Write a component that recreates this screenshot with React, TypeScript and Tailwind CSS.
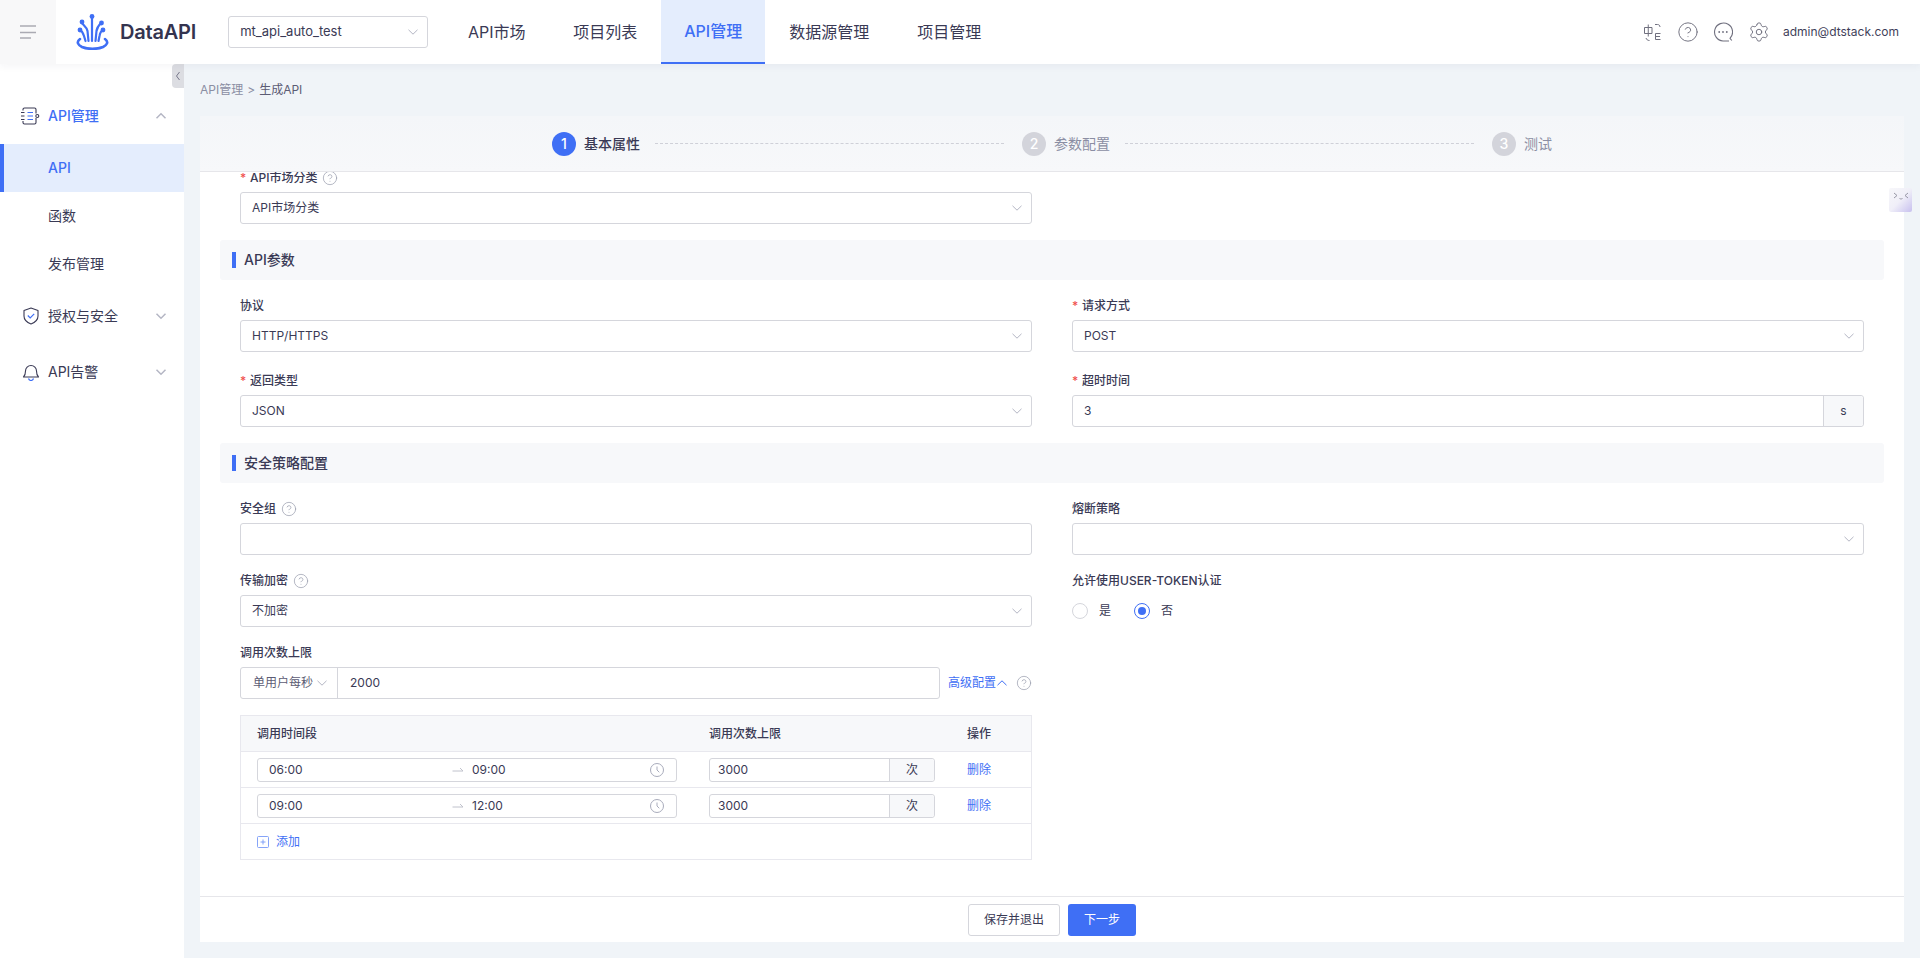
import React from "react";
import { CircleHelp, Settings } from "lucide-react";

const Chevron = ({ up = false, className = "", sw = 1 }: { up?: boolean; className?: string; sw?: number }) => (
  <svg width="12" height="12" viewBox="0 0 12 12" fill="none" className={`shrink-0 ${className}`}>
    <path d={up ? "M1.500 8.200 6 3.800l4.500 4.400" : "M1.500 3.800 6 8.200l4.500-4.400"} stroke="currentColor" strokeWidth={sw} />
  </svg>
);

const Help = ({ className = "" }: { className?: string }) => (
  <CircleHelp size={16} strokeWidth={1.1} className={`shrink-0 text-[#9a9dae] ${className}`} />
);

const Logo = () => (
  <svg width="33" height="36" viewBox="0 0 33 36" fill="none" className="shrink-0">
    <g stroke="#3f6ff5" strokeWidth="2.200" strokeLinecap="round">
      <path d="M16 3v24" />
      <path d="M6 9c1 2 5 4 5.500 8l1 10" />
      <path d="M25 9c-2 2-4 4-4.500 8l-1 10" />
      <path d="M4 16c2 1 3 3 4 6l1.500 5" />
      <path d="M27 16c-2 1-3 3-3.500 6l-1 5" />
    </g>
    <g fill="#3f6ff5">
      <circle cx="16" cy="2.500" r="2.400" />
      <circle cx="6" cy="8" r="2.400" />
      <circle cx="25.500" cy="9" r="2.400" />
      <circle cx="4" cy="16" r="2.400" />
      <circle cx="27" cy="16" r="2.400" />
    </g>
    <path d="M4 25c-4 3-2 6 2 8 6 2.500 15 2.500 21 0 4-2 6-5 2-8" stroke="#3f6ff5" strokeWidth="2.600" strokeLinecap="round" />
  </svg>
);

const Field = ({
  label,
  required,
  help,
  children,
  className = "",
}: {
  label: string;
  required?: boolean;
  help?: boolean;
  children?: React.ReactNode;
  className?: string;
}) => (
  <div className={className}>
    <div className="flex items-center h-5 pt-[2px] mb-[5px] text-xs font-medium text-[#3a3a55]">
      {required && <span className="w-[10px] text-[#f0524f]">*</span>}
      <span>{label}</span>
      {help && <Help className="ml-[5px]" />}
    </div>
    {children}
  </div>
);

const Select = ({ value = "" }: { value?: string }) => (
  <div className="flex items-center justify-between h-8 rounded-[3px] border border-[#d5d6dc] bg-white pl-[11px] pr-2 text-xs text-[#3a3a55]">
    <span>{value}</span>
    <Chevron className="text-[#b4b6c4]" />
  </div>
);

const Input = ({ value = "" }: { value?: string }) => (
  <div className="flex items-center h-8 rounded-[3px] border border-[#d5d6dc] bg-white px-[11px] text-xs text-[#3a3a55]">{value}</div>
);

const Section = ({ title, className = "" }: { title: string; className?: string }) => (
  <div className={`flex items-center h-10 -mx-5 pl-3 rounded-[3px] bg-[#f7f8fa] ${className}`}>
    <span className="w-1 h-4 bg-[#3f6ff5] mr-2" />
    <span className="text-sm font-medium text-[#3a3a55]">{title}</span>
  </div>
);

const Step = ({ n, label, active }: { n: number; label: string; active?: boolean }) => (
  <div className="flex items-center gap-2 shrink-0">
    <span
      className={`flex items-center justify-center w-6 h-6 rounded-full text-sm font-medium text-white ${
        active ? "bg-[#3f6ff5]" : "bg-[#d3d4db]"
      }`}
    >
      {n}
    </span>
    <span className={`text-sm ${active ? "font-medium text-[#3a3a55]" : "text-[#8b8ea3]"}`}>{label}</span>
  </div>
);

const Clock = () => (
  <svg width="16" height="16" viewBox="0 0 16 16" fill="none" className="text-[#a9acbc]">
    <circle cx="8" cy="8" r="6.500" stroke="currentColor" strokeWidth="1" />
    <path d="M8 4.500V8l2.300 2.300" stroke="currentColor" strokeWidth="1" />
  </svg>
);

const TimeRow = ({ start, end }: { start: string; end: string }) => (
  <div className="grid grid-cols-[468px_258px_1fr] items-center h-9 border-b border-[#e8e8ee] text-xs text-[#3a3a55]">
    <div className="pl-4">
      <div className="flex items-center w-[420px] h-6 rounded-[3px] border border-[#d5d6dc] pl-[11px] pr-[11px]">
        <span className="w-[183px]">{start}</span>
        <svg width="12" height="8" viewBox="0 0 12 8" fill="none" className="shrink-0">
          <path d="M0.500 5h10.500L8 2" stroke="#c0c2cc" strokeWidth="1" />
        </svg>
        <span className="ml-2 flex-1">{end}</span>
        <Clock />
      </div>
    </div>
    <div className="flex items-center w-[226px] h-6 rounded-[3px] border border-[#d5d6dc]">
      <span className="flex-1 pl-2">3000</span>
      <span className="flex items-center justify-center w-[45px] h-full border-l border-[#d5d6dc] bg-[#f7f8fa] rounded-r-[3px]">次</span>
    </div>
    <span className="text-[#3f6ff5]">删除</span>
  </div>
);

const NavTab = ({ label, active, width }: { label: string; active?: boolean; width: string }) => (
  <div
    className={`flex items-center justify-center h-16 text-base ${width} ${
      active ? "bg-[#e4edfd] text-[#3f6ff5] font-medium border-b-2 border-[#3f6ff5]" : "text-[#3a3a55]"
    }`}
  >
    {label}
  </div>
);

const SideHead = ({
  icon,
  label,
  open,
  active,
  className = "",
}: {
  icon: React.ReactNode;
  label: string;
  open?: boolean;
  active?: boolean;
  className?: string;
}) => (
  <div className={`flex items-center h-12 pl-5 pr-[17px] text-sm ${active ? "text-[#3f6ff5] font-medium" : "text-[#3a3a55]"} ${className}`}>
    <span className="flex items-center w-7 shrink-0">{icon}</span>
    <span className="flex-1">{label}</span>
    <Chevron up={open} sw={1.5} className="text-[#b4b6c4]" />
  </div>
);

export default function App() {
  return (
    <div className="relative flex flex-col w-full h-[958px] overflow-hidden bg-[#f0f4f8] font-[Inter,'Noto_Sans_CJK_SC',sans-serif] text-[#3a3a55]">
      {/* Header */}
      <header className="relative z-10 flex items-center h-16 shrink-0 bg-white shadow-[0_2px_8px_rgba(30,40,70,0.05)]">
        <div className="flex items-center justify-center w-14 h-16 bg-[#f8f8f9]">
          <svg width="16" height="14" viewBox="0 0 16 14" fill="none">
            <path d="M0 1h16M0 7.500h16M0 13h11" stroke="#aaaab3" strokeWidth="1.600" />
          </svg>
        </div>
        <div className="ml-5">
          <Logo />
        </div>
        <span className="ml-[11px] text-[20px] font-semibold tracking-[-0.2px] text-[#34344f]">DataAPI</span>
        <div className="flex items-center justify-between w-[200px] h-8 ml-8 rounded-[3px] border border-[#d5d6dc] pl-[11px] pr-2 text-[13px] text-[#3a3a55]">
          <span>mt_api_auto_test</span>
          <Chevron className="text-[#b4b6c4]" />
        </div>
        <nav className="flex ml-4">
          <NavTab label="API市场" width="w-[105px]" />
          <NavTab label="项目列表" width="w-[112px]" />
          <NavTab label="API管理" active width="w-[104px]" />
          <NavTab label="数据源管理" width="w-[128px]" />
          <NavTab label="项目管理" width="w-[112px]" />
        </nav>
        <div className="flex items-center ml-auto pr-[21px] text-[#70707f]">
          <svg width="19" height="19" viewBox="0 0 19 19" fill="none" stroke="currentColor" strokeWidth="1">
            <path d="M1.500 4.500h7.500v6H1.500zM5.250 1.500v12" />
            <path d="M12 1.500h2.500c1.500 0 2.500 1 2.500 2.500" />
            <path d="M3 15c.5 1.500 1.500 2.500 3.500 2.500" />
            <path d="M17.500 10.500h-5v6h5M12.500 13.500h4.500" />
          </svg>
          <CircleHelp size={22} strokeWidth={1.05} className="ml-[15px]" />
          <svg width="20" height="20" viewBox="0 0 20 20" fill="none" className="ml-[14px]">
            <path d="M18.800 18.500 17 16.300A9 9 0 1 0 10 19h6" stroke="currentColor" strokeWidth="1.100" strokeLinejoin="round" />
            <circle cx="6.200" cy="10" r="0.900" fill="currentColor" />
            <circle cx="10" cy="10" r="0.900" fill="currentColor" />
            <circle cx="13.800" cy="10" r="0.900" fill="currentColor" />
          </svg>
          <Settings size={22} strokeWidth={1.05} className="ml-[15px]" />
          <span className="ml-[13px] text-xs text-[#3f3f5a]">admin@dtstack.com</span>
        </div>
      </header>

      <div className="flex flex-1 min-h-0">
        {/* Sidebar */}
        <aside className="relative w-[184px] shrink-0 bg-white pt-7">
          <div className="absolute right-0 top-0 flex items-center justify-center w-3 h-6 rounded-bl-[4px] rounded-tl-[4px] bg-[#dcdde2]">
            <svg width="6" height="10" viewBox="0 0 6 10" fill="none">
              <path d="M4.500 1 1.500 5l3 4" stroke="#77778a" strokeWidth="1" />
            </svg>
          </div>
          <SideHead
            active
            open
            className="mb-1"
            label="API管理"
            icon={
              <svg width="20" height="18" viewBox="0 0 20 18" fill="none" stroke="#3a3a55" strokeWidth="1.100">
                <path d="M3 3.500V2.500a1.500 1.500 0 0 1 1.500-1.500h10a1.500 1.500 0 0 1 1.500 1.500v4M16 11v4.500a1.500 1.500 0 0 1-1.500 1.500h-10A1.500 1.500 0 0 1 3 15.500V14" />
                <path d="M1 5.500h3.500M1 9h3.500M1 12.500h3.500" />
                <path d="M7.500 5.500h5.500M7.500 9h5.500M7.500 12.500h5.500" stroke="#3f6ff5" />
                <circle cx="17.300" cy="9" r="1.500" />
              </svg>
            }
          />
          <div className="flex items-center h-12 pl-11 text-sm font-medium text-[#3f6ff5] bg-[#e4edfd] border-l-4 border-[#3f6ff5]">API</div>
          <div className="flex items-center h-12 pl-12 text-sm text-[#3a3a55]">函数</div>
          <div className="flex items-center h-12 pl-12 text-sm text-[#3a3a55]">发布管理</div>
          <SideHead
            className="mt-[4px]"
            label="授权与安全"
            icon={
              <svg width="18" height="18" viewBox="0 0 18 18" fill="none" className="ml-[2px]">
                <path d="M9 1 16 3.500V9c0 4-3 6.500-7 8-4-1.500-7-4-7-8V3.500z" stroke="#3a3a55" strokeWidth="1.100" strokeLinejoin="round" />
                <path d="m5.800 8.500 2.400 2.400 4-4" stroke="#3f6ff5" strokeWidth="1.200" />
              </svg>
            }
          />
          <SideHead
            className="mt-2"
            label="API告警"
            icon={
              <svg width="18" height="18" viewBox="0 0 18 18" fill="none" className="ml-[2px]">
                <path d="M1.500 14h15c-1.500-1.500-2-3-2-6A5.500 5.500 0 0 0 3.500 8c0 3-.5 4.500-2 6z" stroke="#3a3a55" strokeWidth="1.100" strokeLinejoin="round" />
                <path d="M6.500 15.500c.5 1.500 1.500 2 2.500 2s2-.5 2.500-2" stroke="#3f6ff5" strokeWidth="1.200" />
              </svg>
            }
          />
        </aside>

        {/* Content */}
        <main className="flex flex-col flex-1 min-w-0 pl-4 pr-4 pb-4">
          <div className="flex items-center h-[52px] shrink-0 text-xs">
            <span className="text-[#8b8ea3]">API管理</span>
            <span className="mx-1 text-[#8b8ea3]">&gt;</span>
            <span className="text-[#5c5c74]">生成API</span>
          </div>
          <div className="flex flex-col flex-1 min-h-0 bg-white">
            <div className="flex items-center h-14 shrink-0 pl-[352px] bg-gradient-to-b from-[#f4f6f9] to-[#f7f8fa] border-b border-[#e6e6ea]">
              <Step n={1} label="基本属性" active />
              <span className="w-[349px] ml-[15px] mr-[18px] border-t border-dashed border-[#cfd0d8]" />
              <Step n={2} label="参数配置" />
              <span className="w-[349px] ml-[15px] mr-[18px] border-t border-dashed border-[#cfd0d8]" />
              <Step n={3} label="测试" />
            </div>

            <div className="flex-1 min-h-0 overflow-hidden px-10">
              <div className="-mt-[5px]">
                <div className="grid grid-cols-2 gap-x-10">
                  <Field label="API市场分类" required help>
                    <Select value="API市场分类" />
                  </Field>
                </div>

                <Section title="API参数" className="mt-4 mb-[15px]" />

                <div className="grid grid-cols-2 gap-x-10 gap-y-[18px]">
                  <Field label="协议">
                    <Select value="HTTP/HTTPS" />
                  </Field>
                  <Field label="请求方式" required>
                    <Select value="POST" />
                  </Field>
                  <Field label="返回类型" required>
                    <Select value="JSON" />
                  </Field>
                  <Field label="超时时间" required>
                    <div className="flex h-8 rounded-[3px] border border-[#d5d6dc] text-xs">
                      <span className="flex items-center flex-1 pl-[11px]">3</span>
                      <span className="flex items-center justify-center w-10 border-l border-[#d5d6dc] bg-[#f7f8fa] rounded-r-[3px]">s</span>
                    </div>
                  </Field>
                </div>

                <Section title="安全策略配置" className="mt-4 mb-[15px]" />

                <div className="grid grid-cols-2 gap-x-10">
                  <div className="flex flex-col gap-[15px]">
                    <Field label="安全组" help>
                      <Input />
                    </Field>
                    <Field label="传输加密" help>
                      <Select value="不加密" />
                    </Field>
                    <Field label="调用次数上限">
                      <div className="flex items-center">
                        <div className="flex w-[700px] h-8 rounded-[3px] border border-[#d5d6dc] text-xs">
                          <span className="flex items-center gap-[3px] w-[97px] pl-3 border-r border-[#d5d6dc] text-[#5c5c74]">
                            单用户每秒
                            <Chevron className="text-[#b4b6c4]" />
                          </span>
                          <span className="flex items-center pl-3">2000</span>
                        </div>
                        <span className="ml-2 text-xs text-[#3f6ff5]">高级配置</span>
                        <Chevron up className="text-[#3f6ff5]" />
                        <Help className="ml-[8px]" />
                      </div>
                      <div className="mt-4 border-x border-t border-[#e8e8ee]">
                        <div className="grid grid-cols-[468px_258px_1fr] items-center h-9 bg-[#f7f8fa] border-b border-[#e8e8ee] text-xs font-medium">
                          <span className="pl-4">调用时间段</span>
                          <span>调用次数上限</span>
                          <span>操作</span>
                        </div>
                        <TimeRow start="06:00" end="09:00" />
                        <TimeRow start="09:00" end="12:00" />
                        <div className="flex items-center h-9 pl-4 border-b border-[#e8e8ee] text-xs text-[#3f6ff5]">
                          <svg width="12" height="12" viewBox="0 0 12 12" fill="none" stroke="#3f6ff5" strokeWidth="0.900" className="mr-[7px] opacity-70">
                            <rect x="0.500" y="0.500" width="11" height="11" rx="1" />
                            <path d="M6 3.500v5M3.500 6h5" />
                          </svg>
                          添加
                        </div>
                      </div>
                    </Field>
                  </div>
                  <div className="flex flex-col gap-[15px]">
                    <Field label="熔断策略">
                      <Select />
                    </Field>
                    <Field label="允许使用USER-TOKEN认证">
                      <div className="flex items-center h-8 text-xs">
                        <span className="w-4 h-4 rounded-full border border-[#d5d6dc]" />
                        <span className="ml-[11px]">是</span>
                        <span className="flex items-center justify-center w-4 h-4 ml-[23px] rounded-full border border-[#3f6ff5]">
                          <span className="w-2 h-2 rounded-full bg-[#3f6ff5]" />
                        </span>
                        <span className="ml-[11px]">否</span>
                      </div>
                    </Field>
                  </div>
                </div>
              </div>
            </div>

            <div className="flex items-center justify-center gap-2 h-[46px] shrink-0 border-t border-[#e6e6ea] text-xs">
              <span className="flex items-center justify-center w-[92px] h-8 rounded-[3px] border border-[#d5d6dc] text-[#3a3a55]">保存并退出</span>
              <span className="flex items-center justify-center w-[68px] h-8 rounded-[3px] bg-[#3f6ff5] text-white">下一步</span>
            </div>
          </div>
        </main>
      </div>

      {/* floating helper */}
      <div className="absolute left-[1889px] top-[188px] flex items-start justify-center w-[23px] h-6 pt-[4px] rounded-[2px] bg-gradient-to-br from-[#f7f7fa] via-[#f0eff8] to-[#c8c0ee]">
        <svg width="16" height="8" viewBox="0 0 16 8" fill="none" stroke="#8d8d9c" strokeWidth="0.900">
          <path d="M1 1l3 2.500L1 6M15 1l-3 2.500L15 6M6.500 6.500c.8.600 2.200.600 3 0" />
        </svg>
      </div>
    </div>
  );
}
